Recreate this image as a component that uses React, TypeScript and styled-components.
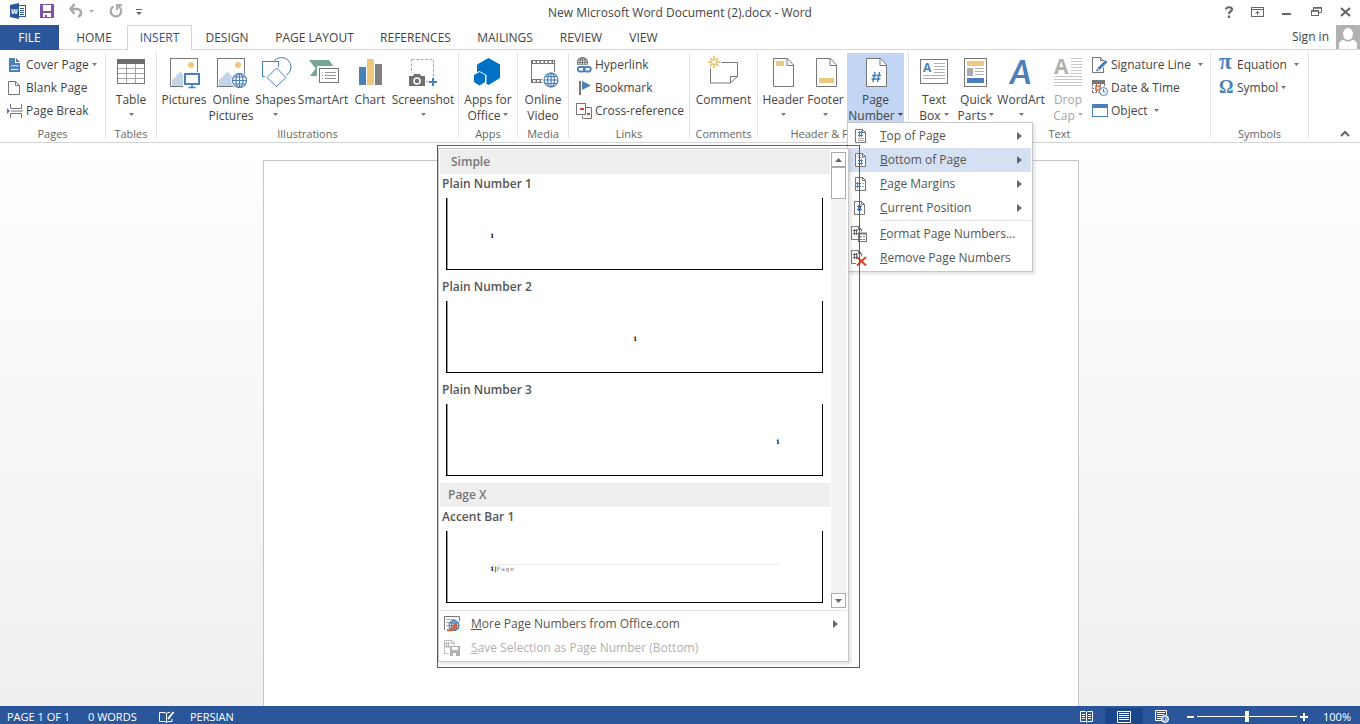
import React from "react";
import styled, { createGlobalStyle, css } from "styled-components";

const BLUE = "#2b579a";
const ICON_BLUE = "#4a7fb8";
const GREY = "#777777";
const YELLOW = "#edc87e";
const LINE = "#d4d4d4";

const GlobalStyle = createGlobalStyle`
  *, *::before, *::after { box-sizing: border-box; }
  body {
    margin: 0;
    background: #fff;
    color: #444;
    font: 12px/16px "Open Sans", "Noto Sans", sans-serif;
    overflow: hidden;
  }
  button {
    margin: 0;
    padding: 0;
    border: 0;
    background: none;
    color: inherit;
    font: inherit;
    white-space: nowrap;
  }
  svg { display: block; flex: none; overflow: visible; }
`;

/* ---------- Frame ---------- */

const Window = styled.div`
  display: flex;
  flex-direction: column;
  height: 100vh;
`;

const TitleBar = styled.header`
  display: grid;
  grid-template-columns: 1fr auto 1fr;
  height: 25px;
  flex: none;
`;

const QuickAccess = styled.div`
  display: flex;
  align-items: center;
  height: 22px;
  padding-left: 10px;
`;

const QuickButton = styled.button<{ $gap: number }>`
  display: flex;
  align-items: center;
  margin-right: ${(p) => p.$gap}px;
`;

const Title = styled.h1`
  margin: 0;
  font-size: 12px;
  font-weight: 400;
  line-height: 26px;
  white-space: nowrap;
`;

const WindowControls = styled.div`
  display: flex;
  justify-content: flex-end;
  align-items: center;
  gap: 17px;
  height: 23px;
  padding-right: 9px;
`;

const TabBar = styled.nav`
  display: flex;
  height: 25px;
  flex: none;
  box-shadow: inset 0 -1px 0 ${LINE};
`;

const FileTab = styled.button`
  width: 59px;
  margin-right: 2px;
  background: ${BLUE};
  color: #fff;
`;

const Tab = styled.button<{ $width: number; $active?: boolean }>`
  display: flex;
  justify-content: center;
  align-items: center;
  width: ${(p) => p.$width}px;
  ${(p) =>
    p.$active &&
    css`
      background: #fff;
      border: 1px solid ${LINE};
      border-bottom: 0;
      color: ${BLUE};
    `}
`;

const Account = styled.div`
  display: flex;
  gap: 7px;
  margin-left: auto;
  height: 24px;
  line-height: 24px;
`;

/* ---------- Ribbon ---------- */

const Ribbon = styled.div`
  display: flex;
  height: 93px;
  flex: none;
  padding-top: 3px;
  border-bottom: 1px solid ${LINE};
`;

const GroupBox = styled.section<{ $width: number }>`
  display: flex;
  flex-direction: column;
  flex: none;
  width: ${(p) => p.$width}px;
  height: 85px;
  border-right: 1px solid #e1e1e1;
`;

const GroupBody = styled.div<{ $pad: number }>`
  display: flex;
  flex: none;
  height: 73px;
  padding-left: ${(p) => p.$pad}px;
`;

const GroupName = styled.h2`
  margin: 0;
  font-size: 11px;
  font-weight: 400;
  line-height: 16px;
  text-align: center;
  color: #666;
  white-space: nowrap;
`;

const BigButton = styled.button<{ $width: number; $active?: boolean }>`
  display: flex;
  flex-direction: column;
  align-items: center;
  width: ${(p) => p.$width}px;
  height: 71px;
  padding-top: 2px;
  background: ${(p) => (p.$active ? "#c2d5f2" : "none")};

  &:disabled { color: #a6a6a6; }
`;

const BigLabel = styled.span`
  display: flex;
  justify-content: center;
  align-items: center;
  gap: 3px;
  height: 16px;

  svg + & { margin-top: 3px; }
  svg { margin-bottom: 3px; }
`;

const SmallColumn = styled.div`
  display: flex;
  flex-direction: column;
  align-items: flex-start;
`;

const SmallButton = styled.button<{ $gap?: number }>`
  display: flex;
  align-items: center;
  gap: 3px;
  height: 23px;

  & > svg:last-child:not(:first-child) { margin-left: ${(p) => p.$gap ?? 0}px; }
`;

const Spacer = styled.div`
  display: flex;
  flex: 1;
  justify-content: flex-end;
  align-items: flex-end;
  padding: 0 10px 5px 0;
`;

/* ---------- Menu and gallery ---------- */

const MenuAnchor = styled.div`
  position: relative;
`;

const Menu = styled.div`
  position: absolute;
  z-index: 2;
  top: 69px;
  left: 0;
  width: 186px;
  padding: 1px;
  border: 1px solid #c6c6c6;
  background: #fff;
  box-shadow: 2px 2px 3px rgba(0, 0, 0, 0.12);
`;

const MenuItem = styled.button<{ $selected?: boolean }>`
  display: grid;
  grid-template-columns: 27px 1fr auto;
  align-items: center;
  width: 100%;
  height: 24px;
  padding: 0 9px 0 4px;
  text-align: left;
  color: #555;
  background: ${(p) => (p.$selected ? "#d5e1f2" : "none")};

  &:disabled { color: #b1b1b1; }
`;

const MenuRule = styled.hr`
  height: 1px;
  margin: 0 0 1px 32px;
  border: 0;
  background: #e1e1e1;
`;

const Gallery = styled.div`
  position: absolute;
  top: 25px;
  right: calc(100% - 1px);
  width: 411px;
  padding: 1px;
  border: 1px solid #c6c6c6;
  background: #fff;
  box-shadow: 2px 2px 3px rgba(0, 0, 0, 0.12);
`;

const Outline = styled.div`
  position: absolute;
  top: 22px;
  right: calc(100% - 12px);
  width: 423px;
  height: 523px;
  border: 1px solid #ed1c24;
  pointer-events: none;
`;

const GalleryScroller = styled.div`
  display: flex;
  height: 460px;
`;

const GalleryList = styled.div`
  width: 390px;
`;

const GalleryHeading = styled.h3<{ $indent: number }>`
  margin: 0;
  padding-left: ${(p) => p.$indent}px;
  background: #eee;
  color: #777;
  font-size: 12px;
  font-weight: 600;
  line-height: 24px;
`;

const GalleryItem = styled.button`
  display: block;
  width: 100%;
  height: 103px;
  padding: 0 7px 7px 2px;
  text-align: left;
`;

const ItemName = styled.span`
  display: block;
  height: 24px;
  line-height: 20px;
  font-weight: 600;
  color: #555;
`;

const Preview = styled.span<{ $align: string }>`
  display: block;
  height: 72px;
  margin-left: 4px;
  padding: 33px 42px 0 43px;
  border: solid #000;
  border-width: 0 1px 1px;
  box-shadow: inset 1px 0 0 #999;
  text-align: ${(p) => p.$align};
  color: #000;
  font: 700 6px/10px "DejaVu Serif", serif;
`;

const AccentLine = styled.span`
  display: block;
  border-top: 1px solid #eee;
  line-height: 8px;

  span {
    color: #777;
    font-weight: 400;
    letter-spacing: 1px;
  }
`;

const ScrollBar = styled.div`
  display: flex;
  flex-direction: column;
  width: 15px;
  margin: 2px 0 2px 1px;
  background: #f3f3f3;
`;

const ScrollButton = styled.button`
  display: flex;
  justify-content: center;
  align-items: center;
  height: 15px;
  border: 1px solid #ababab;
  background: #fff;

  &:last-child { margin-top: auto; }
`;

const ScrollThumb = styled.div`
  height: 32px;
  border: 1px solid #ababab;
  background: #fff;
`;

const GalleryFooter = styled.div`
  padding-top: 1px;
  border-top: 1px solid #e1e1e1;
`;

/* ---------- Document and status bar ---------- */

const Workspace = styled.main`
  display: flex;
  justify-content: center;
  flex: 1;
  min-height: 0;
  padding: 17px 18px 0 0;
  background: linear-gradient(#fff, #efefef);
`;

const Paper = styled.article`
  width: 816px;
  border: 1px solid #c6c6c6;
  border-bottom: 0;
  background: #fff;
`;

const StatusBar = styled.footer`
  display: flex;
  align-items: center;
  height: 18px;
  flex: none;
  padding: 3px 9px 0 7px;
  background: ${BLUE};
  color: #fff;
  font-size: 11px;
`;

const StatusText = styled.span<{ $width?: number }>`
  width: ${(p) => (p.$width ? p.$width + "px" : "auto")};
  white-space: nowrap;
`;

const ViewButtons = styled.div`
  display: flex;
  margin-left: auto;
  margin-right: 6px;
`;

const ViewButton = styled.button<{ $active?: boolean }>`
  display: flex;
  justify-content: center;
  align-items: center;
  width: 38px;
  height: 17px;
  background: ${(p) => (p.$active ? "#19478a" : "none")};
`;

const Zoom = styled.div`
  display: flex;
  align-items: center;
  gap: 3px;
  margin-right: 15px;
`;

const ZoomSlider = styled.input`
  appearance: none;
  width: 100px;
  height: 12px;
  margin: 0;
  background: linear-gradient(#fff, #fff) center / 100% 1px no-repeat;

  &::-webkit-slider-thumb {
    appearance: none;
    width: 4px;
    height: 11px;
    background: #fff;
  }
`;

/* ---------- Icons ---------- */

const Icon = ({ w = 16, h = 16, children }: { w?: number; h?: number; children: React.ReactNode }) => (
  <svg width={w} height={h} viewBox={`0 0 ${w} ${h}`} fill="none" aria-hidden="true">
    {children}
  </svg>
);

const Big = ({ children }: { children: React.ReactNode }) => (
  <Icon w={36} h={34}>{children}</Icon>
);

const Down = ({ color = "#777" }: { color?: string }) => (
  <Icon w={5} h={3}><path d="M0 0h5L2.5 3z" fill={color} /></Icon>
);

const Right = () => (
  <Icon w={5} h={8}><path d="M0 0l5 4-5 4z" fill="#666" /></Icon>
);

const Globe = ({ x, y, r = 7, color = ICON_BLUE }: { x: number; y: number; r?: number; color?: string }) => (
  <g stroke={color} strokeWidth="1.2">
    <circle cx={x} cy={y} r={r} fill="#fff" />
    <ellipse cx={x} cy={y} rx={r * 0.5} ry={r} />
    <path d={`M${x - r} ${y}h${2 * r}M${x} ${y - r}v${2 * r}M${x - r * 0.85} ${y - r * 0.5}h${r * 1.7}M${x - r * 0.85} ${y + r * 0.5}h${r * 1.7}`} />
  </g>
);

const PageShape = () => (
  <>
    <path d="M8.5 3.5h14l6 6.5v21.500h-20z" fill="#fff" stroke={GREY} />
    <path d="M22 3.500v7h6.500" stroke={GREY} />
  </>
);

const PictureFrame = () => (
  <>
    <rect x="4.500" y="3.500" width="27" height="28" fill="#fff" stroke={GREY} />
    <circle cx="25" cy="10" r="3" fill={YELLOW} />
    <path d="M6 25l8-8 2 1 7 8v5H6z" fill="#c2d5e9" />
  </>
);

const icons = {
  table: (
    <Big>
      <rect x="4.500" y="4.500" width="27" height="24" stroke={GREY} fill="#fff" />
      <path d="M4 4h28v5H4z" fill="#6d6d6d" />
      <path d="M13.500 9v19M22.500 9v19M5 13.500h26M5 18.500h26M5 23.500h26" stroke="#a5a5a5" />
    </Big>
  ),
  pictures: (
    <Big>
      <PictureFrame />
      <path d="M17 17h19v17H17z" fill="#fff" />
      <rect x="19" y="19" width="14" height="10" stroke={ICON_BLUE} strokeWidth="2" fill="#fff" />
      <path d="M26 30v2M22.500 32.500h7" stroke={ICON_BLUE} strokeWidth="1.500" />
    </Big>
  ),
  onlinePictures: (
    <Big><PictureFrame /><circle cx="26.500" cy="25.500" r="8.500" fill="#fff" /><Globe x={26.500} y={25.500} /></Big>
  ),
  shapes: (
    <Big>
      <circle cx="23.500" cy="12" r="9.500" stroke={ICON_BLUE} fill="#fff" />
      <rect x="4.500" y="6.500" width="16" height="15" stroke={ICON_BLUE} fill="#fff" />
      <path d="M18.500 13l9.500 9.500-9.500 9L9 22.500z" stroke="#fff" strokeWidth="4" />
      <path d="M18.500 13l9.500 9.500-9.500 9L9 22.500z" stroke={ICON_BLUE} fill="#fff" />
    </Big>
  ),
  smartArt: (
    <Big>
      <path d="M4 5h20l6 8.500L25 21H5l5.500-7.500z" fill="#78a797" />
      <rect x="12" y="11" width="24" height="20" fill="#fff" />
      <rect x="14.500" y="13.500" width="19" height="14" fill="#fff" stroke={GREY} />
      <path d="M17 17.500h1M17 20.500h1M17 23.500h1M20 17.500h11M20 20.500h11M20 23.500h11" stroke="#999" />
    </Big>
  ),
  chart: (
    <Big>
      <path d="M7 12h7v18H7z" fill={ICON_BLUE} />
      <path d="M15 4h7v26h-7z" fill={YELLOW} />
      <path d="M23 9h7v21h-7z" fill="#808080" />
    </Big>
  ),
  screenshot: (
    <Big>
      <rect x="6.500" y="4.500" width="22" height="22" stroke="#aaa" strokeDasharray="3 1.500" />
      <path d="M3 18h18v14H3zM23 22h11v11H23z" fill="#fff" />
      <path d="M4 21h4l1-2h6l1 2h4v10H4z" fill="#707070" />
      <circle cx="12" cy="26" r="3" stroke="#fff" strokeWidth="1.500" />
      <path d="M28 23v8M24 27h8" stroke={ICON_BLUE} strokeWidth="2" />
    </Big>
  ),
  apps: (
    <Big>
      <path d="M18.500 3L30 9.500v13.500l-11.500 7L7 23V9.500z" fill="#0072c6" />
      <path d="M9.500 16l7 4v8l-7 4-7-4v-8z" fill="#fff" />
      <path d="M9.500 17l5.500 3v7l-5.500 3.500L4 27v-7z" fill="#0072c6" />
    </Big>
  ),
  video: (
    <Big>
      <rect x="6.500" y="5.500" width="23" height="22" stroke={GREY} fill="#fff" />
      <path d="M6 7h24M6 26h24" stroke={GREY} strokeWidth="4" />
      <path d="M8 7h21M8 26h21" stroke="#fff" strokeWidth="2" strokeDasharray="2.500 1.500" />
      <circle cx="26" cy="25" r="9" fill="#fff" />
      <Globe x={26} y={25} />
    </Big>
  ),
  comment: (
    <Big>
      <path d="M4.500 7.500h27v14l-7 6.500h-20z" stroke={GREY} fill="#fff" />
      <path d="M24.500 28v-6.500h7" stroke={GREY} />
      <circle cx="8" cy="7" r="7.500" fill="#fff" />
      <path d="M8 1v4M8 9v4M2 7h4M10 7h4M4 3l2.500 2.500M12 3L9.500 5.500M4 11l2.500-2.500M12 11L9.500 8.500" stroke={YELLOW} strokeWidth="1.800" />
      <circle cx="8" cy="7" r="2.500" stroke={YELLOW} strokeWidth="1.300" />
    </Big>
  ),
  header: (<Big><PageShape /><path d="M11 6h8v5h-8z" fill={YELLOW} /></Big>),
  footer: (<Big><PageShape /><path d="M11 23h15v5H11z" fill={YELLOW} /></Big>),
  pageNumber: (
    <Big>
      <PageShape />
      <path d="M17 17l-2 10M21.500 17l-2 10M14 20.500h9M13.500 24h9" stroke={ICON_BLUE} strokeWidth="1.500" />
    </Big>
  ),
  textBox: (
    <Big>
      <rect x="4.500" y="4.500" width="27" height="24" stroke={GREY} fill="#fff" />
      <text x="7" y="17" fontSize="12" fontWeight="700" fill={ICON_BLUE}>A</text>
      <path d="M18 8.500h11M18 11.500h11M18 14.500h11M18 17.500h11M7 20.500h22M7 23.500h22" stroke="#b0b0b0" />
    </Big>
  ),
  quickParts: (
    <Big>
      <rect x="6.500" y="3.500" width="22" height="28" stroke={GREY} fill="#fff" />
      <path d="M9 6h17v5H9z" fill={YELLOW} />
      <path d="M9 13h6v8H9z" fill="#aaa" />
      <path d="M17 13.500h9M17 16.500h9M17 19.500h9" stroke="#b0b0b0" />
      <path d="M9 23h17v5H9z" fill={ICON_BLUE} />
    </Big>
  ),
  wordArt: (
    <Big>
      <text x="7" y="29" fontSize="33" fontStyle="italic" fontWeight="700" fontFamily="Lato" fill={ICON_BLUE}>A</text>
    </Big>
  ),
  dropCap: (
    <Big>
      <text x="4" y="19" fontSize="21" fontWeight="700" fill="#b1b1b1">A</text>
      <path d="M21 3.500h11M21 6.500h11M21 9.500h11M21 12.500h11M21 15.500h11M21 18.500h11M4 21.500h28M4 24.500h28M4 27.500h28M4 30.500h28" stroke="#c8c8c8" />
    </Big>
  ),
  coverPage: (
    <Icon>
      <path d="M2 1h6v5h5v9H2z" fill={ICON_BLUE} />
      <path d="M9 1l4 4H9z" fill={ICON_BLUE} />
      <path d="M4 9.500l1.500-1.500L7 9.500 8.500 8 10 9.500 11.500 8M4 12.500h7" stroke="#fff" />
    </Icon>
  ),
  blankPage: (
    <Icon><path d="M1.500 1.500h7l4 4v9h-11z" stroke={GREY} fill="#fff" /><path d="M8.500 1.500v4h4" stroke={GREY} /></Icon>
  ),
  pageBreak: (
    <Icon>
      <path d="M3.500 1v4.500h11V1M3.500 15v-4.500h11V15M4 8h12" stroke={GREY} />
      <path d="M0 5l3 3-3 3z" fill={ICON_BLUE} />
    </Icon>
  ),
  hyperlink: (
    <Icon>
      <Globe x={6.500} y={5.500} r={5} color={GREY} />
      <path d="M0 8h16v8H0z" fill="#fff" />
      <rect x="1.800" y="10" width="7" height="4.500" rx="2.200" stroke={ICON_BLUE} strokeWidth="1.800" />
      <rect x="7.800" y="10" width="7" height="4.500" rx="2.200" stroke={ICON_BLUE} strokeWidth="1.800" />
    </Icon>
  ),
  bookmark: (
    <Icon><path d="M4 1v14" stroke={GREY} strokeWidth="2" /><path d="M6 1l9 4.500L6 10z" fill={ICON_BLUE} /></Icon>
  ),
  crossReference: (
    <Icon>
      <path d="M9.500 4.500h6v11h-9v-3" stroke={GREY} />
      <rect x=".5" y=".5" width="9" height="11" stroke={GREY} fill="#fff" />
      <path d="M4 6h4M11 11h3" stroke="#d24726" strokeWidth="2" />
    </Icon>
  ),
  signature: (
    <Icon>
      <path d="M.5.500h8l3 3v12H.5z" stroke={GREY} fill="#fff" />
      <path d="M8.500.500v3h3" stroke={GREY} />
      <path d="M14.500 4.500l-9 8" stroke="#fff" strokeWidth="5" />
      <path d="M14.500 4L6.500 12" stroke={ICON_BLUE} strokeWidth="3" />
      <path d="M4 14.500l1-3 2 2z" fill={ICON_BLUE} />
    </Icon>
  ),
  dateTime: (
    <Icon>
      <path d="M0 0h13v4H0z" fill={GREY} />
      <path d="M.5 4v9M12.500 4v3M0 12.500h7M4.500 4v9M8.500 4v3M0 8.500h8" stroke={GREY} strokeDasharray="2 1" />
      <rect x="4" y="6" width="4" height="4" stroke="#e0662c" fill="#fff" strokeWidth="1.500" />
      <circle cx="11.500" cy="11.500" r="4" stroke={ICON_BLUE} fill="#fff" />
      <path d="M11.500 9v3h2" stroke={ICON_BLUE} />
    </Icon>
  ),
  object: (
    <Icon><rect x=".5" y="1.500" width="15" height="12" stroke={ICON_BLUE} fill="#fff" /><path d="M0 1h16v4H0z" fill={ICON_BLUE} /></Icon>
  ),
  equation: (
    <Icon w={15}><text x="0" y="12" fontSize="23" fontWeight="700" fontFamily="Liberation Serif" fill={ICON_BLUE}>π</text></Icon>
  ),
  symbol: (
    <Icon w={15}><text x="0" y="13" fontSize="18" fontWeight="700" fontFamily="Liberation Serif" fill={ICON_BLUE}>Ω</text></Icon>
  ),
};

const hash = (x: number, y: number, color: string) => (
  <path d={`M${x + 1.5} ${y}v6M${x + 3.5} ${y}v6M${x} ${y + 1.5}h5M${x} ${y + 4.5}h5`} stroke={color} />
);

const MenuPage = () => (
  <>
    <path d="M1.500 1.500h7l3 3v10h-10z" stroke={GREY} fill="#fff" />
    <path d="M8.500 1.500v3h3" stroke={GREY} />
  </>
);

const menuIcons = {
  top: <Icon><g transform="translate(1 0)"><MenuPage />{hash(4, 3, ICON_BLUE)}<path d="M4 10.500h6M4 12.500h6" stroke="#aaa" /></g></Icon>,
  bottom: <Icon><g transform="translate(1 0)"><MenuPage /><path d="M4 3.500h3M4 5.500h6" stroke="#aaa" />{hash(4, 7, ICON_BLUE)}</g></Icon>,
  margins: <Icon><g transform="translate(1 0)"><MenuPage />{hash(2, 6, ICON_BLUE)}<path d="M8 7.500h2M8 10.500h2" stroke="#aaa" /></g></Icon>,
  current: <Icon><MenuPage />{hash(4, 5, ICON_BLUE)}</Icon>,
  format: (
    <Icon>
      <g transform="translate(-2 0)">
        <path d="M7 13.500H.5v-13h7l3 3v2M7.500.500v3h3" stroke={GREY} />{hash(2, 3, "#666")}
        <rect x="7.500" y="7.500" width="8" height="8" stroke={GREY} fill="#fff" />
        <path d="M7 7.500h9" stroke={GREY} strokeWidth="2" /><path d="M9 10.500h5M9 13.500h5" stroke="#777" strokeDasharray="2 1" />
      </g>
    </Icon>
  ),
  remove: (
    <Icon>
      <g transform="translate(-2 0)">
        <path d="M5 13.500H.5v-13h7l3 3v3M7.500.500v3h3" stroke={GREY} />{hash(2, 3, "#666")}
        <path d="M6 7l9 8.500M15 7l-9 8.500" stroke="#d9472b" strokeWidth="2" />
      </g>
    </Icon>
  ),
  office: (
    <Icon>
      <path d="M.5 14V.500h15V5" stroke={GREY} /><path d="M2 3.500h9M2 6.500h3M2 9.500h2" stroke="#aaa" />
      <Globe x={10} y={9.500} r={5} />
      <path d="M3 14c4 1 7-1 8-4" stroke="#e8572a" strokeWidth="2" /><path d="M8 10.500l4-4 1.500 5z" fill="#e8572a" />
    </Icon>
  ),
  save: (
    <Icon>
      <path d="M5 13.500H.5v-13h7l3 3v2M7.500.500v3h3" stroke="#bbb" />{hash(1, 2, "#bbb")}
      <path d="M6 6h10v10H6z" fill="#b1b1b1" /><path d="M8 7h6v3H8zM9 13h3v3H9z" fill="#fff" />
    </Icon>
  ),
};

/* ---------- Composition ---------- */

const Group = ({ name, width, pad, children }: { name: string; width: number; pad: number; children: React.ReactNode }) => (
  <GroupBox $width={width} aria-label={name}>
    <GroupBody $pad={pad}>{children}</GroupBody>
    <GroupName>{name}</GroupName>
  </GroupBox>
);

interface BigProps {
  icon: React.ReactNode;
  width: number;
  lines: string[];
  drop?: boolean;
  active?: boolean;
  disabled?: boolean;
}

const BigCommand = ({ icon, width, lines, drop, active, disabled }: BigProps) => (
  <BigButton type="button" $width={width} $active={active} disabled={disabled}>
    {icon}
    <BigLabel>{lines[0]}</BigLabel>
    <BigLabel>
      {lines[1]}
      {drop && <Down color={active ? "#444" : disabled ? "#b1b1b1" : undefined} />}
    </BigLabel>
  </BigButton>
);

const SmallCommand = ({ icon, label, drop, gap }: { icon: React.ReactNode; label: string; drop?: boolean; gap?: number }) => (
  <SmallButton type="button" $gap={gap}>
    {icon}
    <span>{label}</span>
    {drop && <Down />}
  </SmallButton>
);

const Accel = ({ text }: { text: string }) => (
  <span><u>{text[0]}</u>{text.slice(1)}</span>
);

const MenuCommand = ({ icon, text, sub, selected, disabled }: { icon: React.ReactNode; text: string; sub?: boolean; selected?: boolean; disabled?: boolean }) => (
  <MenuItem type="button" role="menuitem" $selected={selected} disabled={disabled}>
    {icon}
    <Accel text={text} />
    {sub && <Right />}
  </MenuItem>
);

const tabs: [string, number][] = [
  ["HOME", 66], ["INSERT", 65], ["DESIGN", 70], ["PAGE LAYOUT", 105],
  ["REFERENCES", 97], ["MAILINGS", 82], ["REVIEW", 70], ["VIEW", 55],
];

const plainNumbers: [string, string][] = [
  ["Plain Number 1", "left"], ["Plain Number 2", "center"], ["Plain Number 3", "right"],
];

const PageNumberMenu = () => (
  <Menu role="menu">
    <MenuCommand icon={menuIcons.top} text="Top of Page" sub />
    <MenuCommand icon={menuIcons.bottom} text="Bottom of Page" sub selected />
    <MenuCommand icon={menuIcons.margins} text="Page Margins" sub />
    <MenuCommand icon={menuIcons.current} text="Current Position" sub />
    <MenuRule />
    <MenuCommand icon={menuIcons.format} text="Format Page Numbers..." />
    <MenuCommand icon={menuIcons.remove} text="Remove Page Numbers" />
    <Gallery>
      <GalleryScroller>
        <GalleryList>
          <GalleryHeading $indent={11}>Simple</GalleryHeading>
          {plainNumbers.map(([name, align]) => (
            <GalleryItem type="button" key={name}>
              <ItemName>{name}</ItemName>
              <Preview $align={align}>1</Preview>
            </GalleryItem>
          ))}
          <GalleryHeading $indent={8}>Page X</GalleryHeading>
          <GalleryItem type="button">
            <ItemName>Accent Bar 1</ItemName>
            <Preview $align="left"><AccentLine>1|<span>Page</span></AccentLine></Preview>
          </GalleryItem>
        </GalleryList>
        <ScrollBar>
          <ScrollButton type="button" aria-label="Scroll up"><Icon w={7} h={4}><path d="M0 4h7L3.500 0z" fill="#666" /></Icon></ScrollButton>
          <ScrollThumb />
          <ScrollButton type="button" aria-label="Scroll down"><Icon w={7} h={4}><path d="M0 0h7L3.500 4z" fill="#666" /></Icon></ScrollButton>
        </ScrollBar>
      </GalleryScroller>
      <GalleryFooter>
        <MenuCommand icon={menuIcons.office} text="More Page Numbers from Office.com" sub />
        <MenuCommand icon={menuIcons.save} text="Save Selection as Page Number (Bottom)" disabled />
      </GalleryFooter>
    </Gallery>
    <Outline />
  </Menu>
);

export default function App() {
  return (
    <Window>
      <GlobalStyle />
      <TitleBar>
        <QuickAccess>
          <QuickButton type="button" aria-label="Word" $gap={14}>
            <Icon>
              <rect x="8.500" y="2.500" width="7" height="11" stroke={BLUE} fill="#fff" />
              <path d="M10 5.500h4M10 7.500h4M10 9.500h4M10 11.500h4" stroke={BLUE} />
              <path d="M0 2l9-2v16l-9-2z" fill={BLUE} />
              <text x="1" y="11" fontSize="7" fontWeight="700" fill="#fff">W</text>
            </Icon>
          </QuickButton>
          <QuickButton type="button" aria-label="Save" $gap={15}>
            <Icon w={14} h={14}>
              <path d="M0 0h14v14H0z" fill="#8151a5" />
              <path d="M3 1h8v6H3zM3 9h8v4H7v-2H5v2H3z" fill="#fff" />
            </Icon>
          </QuickButton>
          <QuickButton type="button" aria-label="Undo" $gap={14}>
            <Icon w={14} h={14}>
              <path d="M1 5h7a4 4 0 0 1 4 4c0 2-1 3-3 4" stroke="#aaa" strokeWidth="2.500" />
              <path d="M5.500 0L1.500 5l4 5" stroke="#aaa" strokeWidth="2.500" />
            </Icon>
            <Icon w={12} h={3}><path d="M6 0h5L8.500 3z" fill="#b1b1b1" /></Icon>
          </QuickButton>
          <QuickButton type="button" aria-label="Repeat" $gap={14}>
            <Icon w={13} h={14}>
              <path d="M4.500 2.500a5.300 5.300 0 1 0 5 0" stroke="#aaa" strokeWidth="2.200" />
              <path d="M8 6V1h5" stroke="#aaa" strokeWidth="2" />
            </Icon>
          </QuickButton>
          <QuickButton type="button" aria-label="Customize toolbar" $gap={0}>
            <Icon w={6} h={5}><path d="M0 .500h6" stroke="#666" /><path d="M0 3h6L3 6z" fill="#666" /></Icon>
          </QuickButton>
        </QuickAccess>
        <Title>New Microsoft Word Document (2).docx - Word</Title>
        <WindowControls>
          <QuickButton type="button" aria-label="Help" $gap={0}>
            <Icon w={10} h={12}><path d="M2 3.500C2 .500 8 .500 8 3.500 8 5.500 5 5 5 8M5 9.500V12" stroke="#666" strokeWidth="2.200" /></Icon>
          </QuickButton>
          <QuickButton type="button" aria-label="Ribbon display" $gap={0}>
            <Icon w={13} h={10}>
              <rect x=".5" y=".5" width="12" height="9" stroke="#666" /><path d="M1 2.500h11M6.500 8V4.500M4.500 6.500l2-2 2 2" stroke="#666" />
            </Icon>
          </QuickButton>
          <QuickButton type="button" aria-label="Minimize" $gap={2}>
            <Icon w={11} h={10}><path d="M1 7h9" stroke="#666" strokeWidth="2" /></Icon>
          </QuickButton>
          <QuickButton type="button" aria-label="Restore" $gap={1}>
            <Icon w={11} h={9}>
              <path d="M2.500 3V.500h8v5H8" stroke="#666" /><rect x=".5" y="3.500" width="7" height="5" stroke="#666" /><path d="M0 4h8M2 1h9" stroke="#666" strokeWidth="1.500" />
            </Icon>
          </QuickButton>
          <QuickButton type="button" aria-label="Close" $gap={0}>
            <Icon w={11} h={10}><path d="M1 1l9 8M10 1L1 9" stroke="#666" strokeWidth="2.200" /></Icon>
          </QuickButton>
        </WindowControls>
      </TitleBar>

      <TabBar>
        <FileTab type="button">FILE</FileTab>
        {tabs.map(([name, width]) => (
          <Tab type="button" key={name} $width={width} $active={name === "INSERT"}>{name}</Tab>
        ))}
        <Account>
          <button type="button">Sign in</button>
          <Icon w={24} h={24}>
            <path d="M0 0h24v24H0z" fill="#b1b1b1" />
            <ellipse cx="12" cy="9" rx="5" ry="6" fill="#fff" />
            <path d="M3 24v-4c0-3 2-5 5-5 2 2 6 2 8 0 3 0 5 2 5 5v4z" fill="#fff" />
          </Icon>
        </Account>
      </TabBar>

      <Ribbon>
        <Group name="Pages" width={106} pad={7}>
          <SmallColumn>
            <SmallCommand icon={icons.coverPage} label="Cover Page" drop />
            <SmallCommand icon={icons.blankPage} label="Blank Page" />
            <SmallCommand icon={icons.pageBreak} label="Page Break" />
          </SmallColumn>
        </Group>
        <Group name="Tables" width={51} pad={0}>
          <BigCommand icon={icons.table} width={50} lines={["Table"]} drop />
        </Group>
        <Group name="Illustrations" width={302} pad={3}>
          <BigCommand icon={icons.pictures} width={48} lines={["Pictures"]} />
          <BigCommand icon={icons.onlinePictures} width={46} lines={["Online", "Pictures"]} />
          <BigCommand icon={icons.shapes} width={43} lines={["Shapes"]} drop />
          <BigCommand icon={icons.smartArt} width={52} lines={["SmartArt"]} />
          <BigCommand icon={icons.chart} width={42} lines={["Chart"]} />
          <BigCommand icon={icons.screenshot} width={64} lines={["Screenshot"]} drop />
        </Group>
        <Group name="Apps" width={59} pad={0}>
          <BigCommand icon={icons.apps} width={58} lines={["Apps for", "Office"]} drop />
        </Group>
        <Group name="Media" width={51} pad={0}>
          <BigCommand icon={icons.video} width={50} lines={["Online", "Video"]} />
        </Group>
        <Group name="Links" width={121} pad={7}>
          <SmallColumn>
            <SmallCommand icon={icons.hyperlink} label="Hyperlink" />
            <SmallCommand icon={icons.bookmark} label="Bookmark" />
            <SmallCommand icon={icons.crossReference} label="Cross-reference" />
          </SmallColumn>
        </Group>
        <Group name="Comments" width={68} pad={0}>
          <BigCommand icon={icons.comment} width={67} lines={["Comment"]} />
        </Group>
        <Group name="Header & Footer" width={151} pad={4}>
          <BigCommand icon={icons.header} width={42} lines={["Header"]} drop />
          <BigCommand icon={icons.footer} width={43} lines={["Footer"]} drop />
          <MenuAnchor>
            <BigCommand icon={icons.pageNumber} width={57} lines={["Page", "Number"]} drop active />
            <PageNumberMenu />
          </MenuAnchor>
        </Group>
        <Group name="Text" width={302} pad={5}>
          <BigCommand icon={icons.textBox} width={40} lines={["Text", "Box"]} drop />
          <BigCommand icon={icons.quickParts} width={44} lines={["Quick", "Parts"]} drop />
          <BigCommand icon={icons.wordArt} width={46} lines={["WordArt"]} drop />
          <BigCommand icon={icons.dropCap} width={48} lines={["Drop", "Cap"]} drop disabled />
          <SmallColumn>
            <SmallCommand icon={icons.signature} label="Signature Line" drop gap={4} />
            <SmallCommand icon={icons.dateTime} label="Date & Time" />
            <SmallCommand icon={icons.object} label="Object" drop gap={4} />
          </SmallColumn>
        </Group>
        <Group name="Symbols" width={98} pad={8}>
          <SmallColumn>
            <SmallCommand icon={icons.equation} label="Equation" drop gap={4} />
            <SmallCommand icon={icons.symbol} label="Symbol" drop />
          </SmallColumn>
        </Group>
        <Spacer>
          <button type="button" aria-label="Collapse the ribbon">
            <Icon w={10} h={6}><path d="M1 5l4-4 4 4" stroke="#666" strokeWidth="2" /></Icon>
          </button>
        </Spacer>
      </Ribbon>

      <Workspace><Paper /></Workspace>

      <StatusBar>
        <StatusText $width={81}>PAGE 1 OF 1</StatusText>
        <StatusText $width={71}>0 WORDS</StatusText>
        <StatusText $width={31}>
          <Icon w={15} h={12}>
            <path d="M11 1.500H9L7.500 2.500 6 1.500H.5v9H6l1.500 1 1.500-1h4V8M7.500 2v9" stroke="#fff" />
            <path d="M14.500 1L9 8" stroke="#fff" strokeWidth="2" />
          </Icon>
        </StatusText>
        <StatusText>PERSIAN</StatusText>
        <ViewButtons>
          <ViewButton type="button" aria-label="Read mode">
            <Icon w={13} h={12}>
              <path d="M.5.500h5l1 1 1-1h5v10h-5l-1 1-1-1h-5zM6.500 1v11M2 3.500h3M2 5.500h3M2 7.500h3M8 3.500h3M8 5.500h3M8 7.500h3" stroke="#fff" />
            </Icon>
          </ViewButton>
          <ViewButton type="button" aria-label="Print layout" $active>
            <Icon w={14} h={12}><path d="M.5.500h13v11H.5zM2 2.500h10M2 4.500h10M2 6.500h10M2 8.500h10" stroke="#fff" /></Icon>
          </ViewButton>
          <ViewButton type="button" aria-label="Web layout">
            <Icon w={14} h={13}>
              <path d="M7 10.500H.5V.500h11V5M2 2.500h8M2 4.500h7M2 6.500h5M2 8.500h4" stroke="#fff" />
              <circle cx="10" cy="9" r="3.500" fill="#9db4d6" stroke="#fff" /><path d="M8 9l2-2v3z" fill="#2b579a" />
            </Icon>
          </ViewButton>
        </ViewButtons>
        <Zoom>
          <button type="button" aria-label="Zoom out"><Icon w={7} h={8}><path d="M0 4h7" stroke="#fff" strokeWidth="2" /></Icon></button>
          <ZoomSlider type="range" min={0} max={100} defaultValue={50} aria-label="Zoom" />
          <button type="button" aria-label="Zoom in"><Icon w={8} h={8}><path d="M0 4h8M4 0v8" stroke="#fff" strokeWidth="2" /></Icon></button>
        </Zoom>
        <StatusText>100%</StatusText>
      </StatusBar>
    </Window>
  );
}
